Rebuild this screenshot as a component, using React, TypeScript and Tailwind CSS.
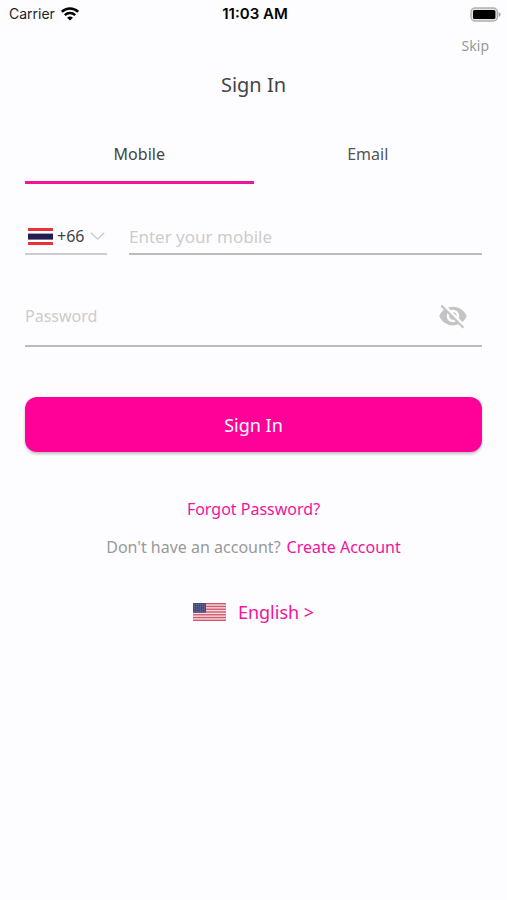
import { useState } from "react";

const TABS = [
  { id: "mobile", label: "Mobile" },
  { id: "email", label: "Email" },
] as const;

type TabId = (typeof TABS)[number]["id"];

const DIAL_CODES = ["+66", "+65", "+60", "+1"];

const STRIPES = [0, 2, 4, 6, 8, 10, 12];

function StatusBar() {
  return (
    <div className="grid grid-cols-3 items-center h-7 pl-[9px] pr-1.5 font-['Inter',sans-serif] text-sm text-[#222]">
      <div className="flex items-center gap-1.5">
        <span>Carrier</span>
        <svg className="w-[18px] h-[14px] text-black" viewBox="0 0 18 14" fill="none" aria-hidden="true">
          <path d="M.8 4.8C5.4.4 12.6.4 17.2 4.8" stroke="currentColor" strokeWidth="2.6" />
          <path d="M3.8 8.1c3-2.8 7.4-2.8 10.4 0" stroke="currentColor" strokeWidth="2.4" />
          <path d="M9 13.6 6.1 10.7c1.7-1.5 4.1-1.5 5.8 0z" fill="currentColor" />
        </svg>
      </div>
      <span className="text-center text-[15px] font-semibold text-black">11:03 AM</span>
      <svg className="justify-self-end w-[31px] h-[15px]" viewBox="0 0 31 15" aria-hidden="true">
        <rect x="1" y="1" width="26.4" height="13" rx="4" fill="#e4e4e4" stroke="#b0b0b0" strokeWidth="1.4" />
        <rect x="3" y="3" width="22.4" height="9" rx="1.5" fill="#000" />
        <path d="M28.6 5.2c1.2.3 2 1.2 2 2.3s-.8 2-2 2.3z" fill="#a3a3a3" />
      </svg>
    </div>
  );
}

function ThaiFlag() {
  return (
    <svg className="w-[25px] h-[17px] shrink-0" viewBox="0 0 25 17" aria-hidden="true">
      <rect width="25" height="17" fill="#fff" />
      <rect width="25" height="3" fill="#e8323c" />
      <rect y="5.6" width="25" height="6" fill="#241d4f" />
      <rect y="14" width="25" height="3" fill="#e8323c" />
    </svg>
  );
}

function UsFlag() {
  return (
    <svg className="w-[33px] h-[18px]" viewBox="0 0 33 18" aria-hidden="true">
      <rect width="33" height="18" fill="#f4dfe3" />
      {STRIPES.map((n) => (
        <rect key={n} y={(n * 18) / 13} width="33" height={18 / 13} fill="#d2566a" />
      ))}
      <rect width="13" height="9.7" fill="#484a7c" />
      {[1.6, 3.8, 6, 8.2].map((y) => (
        <path key={y} d={`M1 ${y}h11`} stroke="#8486ac" strokeWidth="0.7" strokeDasharray="0.8 1.2" />
      ))}
    </svg>
  );
}

function EyeOffIcon() {
  return (
    <svg className="w-[30px] h-[30px]" viewBox="0 0 24 24" fill="currentColor" aria-hidden="true">
      <path d="M12 7c2.76 0 5 2.24 5 5 0 .65-.13 1.26-.36 1.83l2.92 2.92c1.51-1.26 2.7-2.89 3.43-4.75-1.73-4.39-6-7.5-11-7.5-1.4 0-2.74.25-3.98.7l2.16 2.16C10.74 7.13 11.35 7 12 7zM2 4.27l2.28 2.28.46.46C3.08 8.3 1.78 10.02 1 12c1.73 4.39 6 7.5 11 7.5 1.55 0 3.03-.3 4.38-.84l.42.42L19.73 22 21 20.73 3.27 3 2 4.27zM7.53 9.8l1.55 1.55c-.05.21-.08.43-.08.65 0 1.66 1.34 3 3 3 .22 0 .44-.03.65-.08l1.55 1.55c-.67.33-1.41.53-2.2.53-2.76 0-5-2.24-5-5 0-.79.2-1.53.53-2.2zm4.31-.78 3.15 3.15.02-.16c0-1.66-1.34-3-3-3l-.17.01z" />
    </svg>
  );
}

export default function App() {
  const [tab, setTab] = useState<TabId>("mobile");
  const [showPassword, setShowPassword] = useState(false);

  return (
    <div className="min-h-screen bg-[#fdfdff] font-['Noto_Sans',sans-serif] text-[#444]">
      <StatusBar />

      <div className="flex justify-end pr-[18px] pt-2">
        <button type="button" className="text-sm text-[#999] cursor-pointer">
          Skip
        </button>
      </div>

      <main className="px-[25px]">
        <h1 className="mt-[15px] text-center text-xl leading-7">Sign In</h1>

        <div role="tablist" className="mt-[35px] flex">
          {TABS.map((t) => (
            <button
              key={t.id}
              type="button"
              role="tab"
              aria-selected={tab === t.id}
              onClick={() => setTab(t.id)}
              className={`flex-1 h-[50px] pb-2 border-b-3 text-base cursor-pointer ${
                tab === t.id ? "border-[#f0149b] text-[#444]" : "border-transparent text-[#555]"
              }`}
            >
              {t.label}
            </button>
          ))}
        </div>

        <form onSubmit={(e) => e.preventDefault()}>
          <div className="mt-[35px] flex gap-[22px]">
            {tab === "mobile" && (
              <div className="relative flex items-center w-[82px] h-9 pl-[3px] border-b-2 border-[#ccc]">
                <ThaiFlag />
                <select
                  aria-label="Country code"
                  className="flex-1 min-w-0 h-full pl-1 appearance-none bg-transparent text-base outline-none cursor-pointer"
                >
                  {DIAL_CODES.map((code) => (
                    <option key={code}>{code}</option>
                  ))}
                </select>
                <svg
                  className="absolute right-0.5 w-[15px] h-2 pointer-events-none"
                  viewBox="0 0 15 8"
                  fill="none"
                  stroke="#ccc"
                  strokeWidth="1.3"
                  aria-hidden="true"
                >
                  <path d="M.8.8l6.7 6.2L14.2.8" />
                </svg>
              </div>
            )}
            <input
              key={tab}
              type={tab === "mobile" ? "tel" : "email"}
              aria-label={tab === "mobile" ? "Mobile" : "Email"}
              placeholder={tab === "mobile" ? "Enter your mobile" : "Enter your email"}
              className="flex-1 min-w-0 h-9 border-b-2 border-[#bbb] text-[17px] placeholder:text-[#ccc] outline-none"
            />
          </div>

          <div className="mt-8 flex items-center h-[60px] pr-[14px] border-b-2 border-[#bbb]">
            <input
              type={showPassword ? "text" : "password"}
              aria-label="Password"
              placeholder="Password"
              className="flex-1 min-w-0 h-full text-base placeholder:text-[#ccc] outline-none"
            />
            <button
              type="button"
              aria-label={showPassword ? "Hide password" : "Show password"}
              onClick={() => setShowPassword(!showPassword)}
              className="text-[#c4c4c4] cursor-pointer"
            >
              <EyeOffIcon />
            </button>
          </div>

          <button
            type="submit"
            className="mt-[50px] w-full h-[55px] rounded-xl bg-[#ff0099] text-lg text-white shadow-[0_2px_3px_rgba(0,0,0,0.25)] cursor-pointer"
          >
            Sign In
          </button>
        </form>

        <div className="mt-[45px] flex flex-col items-center gap-[14px] text-base text-[#999]">
          <a href="#forgot" className="text-[#f0149b]">
            Forgot Password?
          </a>
          <p className="flex gap-1.5">
            <span>Don't have an account?</span>
            <a href="#register" className="text-[#f0149b]">
              Create Account
            </a>
          </p>
        </div>

        <div className="mt-[39px] flex justify-center">
          <button type="button" className="flex items-center gap-3 text-lg text-[#f0149b] cursor-pointer">
            <UsFlag />
            <span>English &gt;</span>
          </button>
        </div>
      </main>
    </div>
  );
}
